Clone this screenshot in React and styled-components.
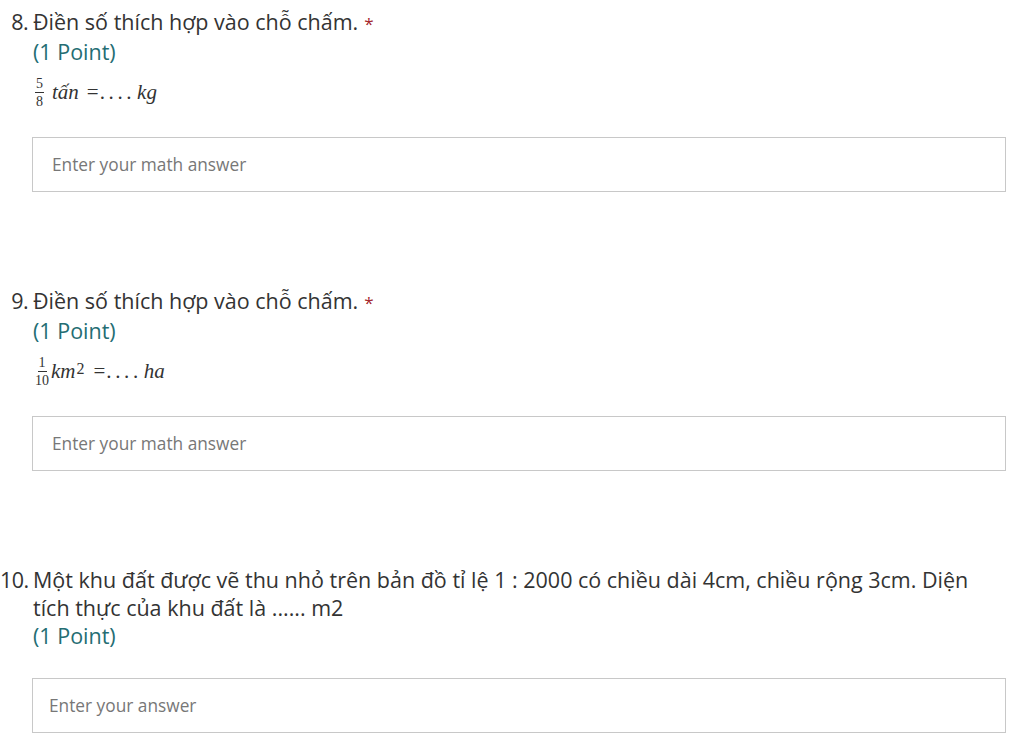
import React from "react";
import styled, { createGlobalStyle } from "styled-components";

const Global = createGlobalStyle`
  html, body {
    margin: 0;
    padding: 0;
    background: #fff;
  }
  body {
    font-family: "Open Sans", "Noto Sans", "Liberation Sans", sans-serif;
    color: #333;
  }
`;

const Page = styled.div`
  width: 1024px;
  padding: 8px 0 0 0;
  box-sizing: border-box;
`;

const Question = styled.section`
  display: grid;
  grid-template-columns: 28px 1fr;
  column-gap: 5px;
  padding-right: 18px;
  & + & {
    margin-top: 95px;
  }
`;

const Num = styled.div`
  text-align: right;
  font-size: 21.5px;
  line-height: 28px;
  letter-spacing: -0.6px;
`;

const Body = styled.div`
  display: flex;
  flex-direction: column;
  min-width: 0;
`;

const Title = styled.div`
  font-size: 21.5px;
  line-height: 28px;
  color: #333;
`;

const Star = styled.span`
  color: #a4262c;
  margin-left: 6px;
  font-size: 17px;
`;

const Points = styled.div`
  font-size: 21.5px;
  line-height: 28px;
  color: #246d73;
`;

const MathLine = styled.div`
  display: flex;
  align-items: center;
  height: 35px;
  margin-top: 9px;
  padding-left: 2px;
  font-family: "Liberation Serif", "DejaVu Serif", serif;
  font-size: 21px;
  color: #333;
`;

const Frac = styled.span`
  display: inline-flex;
  flex-direction: column;
  align-items: center;
  font-size: 14px;
  line-height: 14px;
  margin-right: ${p => p.gap || 0}px;
  & > span:first-child {
    border-bottom: 1px solid #333;
    padding: 0 1px 1px;
  }
  & > span:last-child {
    padding-top: 2px;
  }
`;

const Var = styled.i`
  font-style: italic;
`;

const Sup = styled.sup`
  font-size: 16px;
  position: relative;
  top: -3px;
  margin-left: 1px;
`;

const Eq = styled.span`
  margin: 0 1px 0 ${p => p.left || 8}px;
`;

const Dots = styled.span`
  letter-spacing: 3.6px;
  margin-right: 2px;
`;

const AnswerBox = styled.input`
  display: block;
  box-sizing: border-box;
  width: 974px;
  height: 55px;
  margin-top: ${p => p.gap}px;
  margin-left: -1px;
  padding: 0 0 0 ${p => p.pad}px;
  border: 1px solid #c8c8c8;
  background: #fff;
  font-family: "Open Sans", "Noto Sans", sans-serif;
  font-size: 17.3px;
  color: #333;
  outline: none;
  &::placeholder {
    color: #777;
  }
`;

export default function App() {
  return (
    <Page>
      <Global />
      <Question>
        <Num>8.</Num>
        <Body>
          <Title>
            Điền số thích hợp vào chỗ chấm.<Star>*</Star>
          </Title>
          <Points>(1 Point)</Points>
          <MathLine>
            <Frac gap={8}>
              <span>5</span>
              <span>8</span>
            </Frac>
            <Var>tấn</Var>
            <Eq>=</Eq>
            <Dots>....</Dots>
            <Var>kg</Var>
          </MathLine>
          <AnswerBox gap={27} pad={19} placeholder="Enter your math answer" />
        </Body>
      </Question>

      <Question>
        <Num>9.</Num>
        <Body>
          <Title>
            Điền số thích hợp vào chỗ chấm.<Star>*</Star>
          </Title>
          <Points>(1 Point)</Points>
          <MathLine>
            <Frac gap={2}>
              <span>1</span>
              <span>10</span>
            </Frac>
            <Var>km</Var>
            <Sup>2</Sup>
            <Eq left={9}>=</Eq>
            <Dots>....</Dots>
            <Var>ha</Var>
          </MathLine>
          <AnswerBox gap={27} pad={19} placeholder="Enter your math answer" />
        </Body>
      </Question>

      <Question>
        <Num>10.</Num>
        <Body>
          <Title>
            Một khu đất được vẽ thu nhỏ trên bản đồ tỉ lệ 1 : 2000 có chiều dài 4cm, chiều rộng 3cm. Diện tích thực của khu đất là ...... m2
          </Title>
          <Points>(1 Point)</Points>
          <AnswerBox gap={28} pad={16} placeholder="Enter your answer" />
        </Body>
      </Question>
    </Page>
  );
}
